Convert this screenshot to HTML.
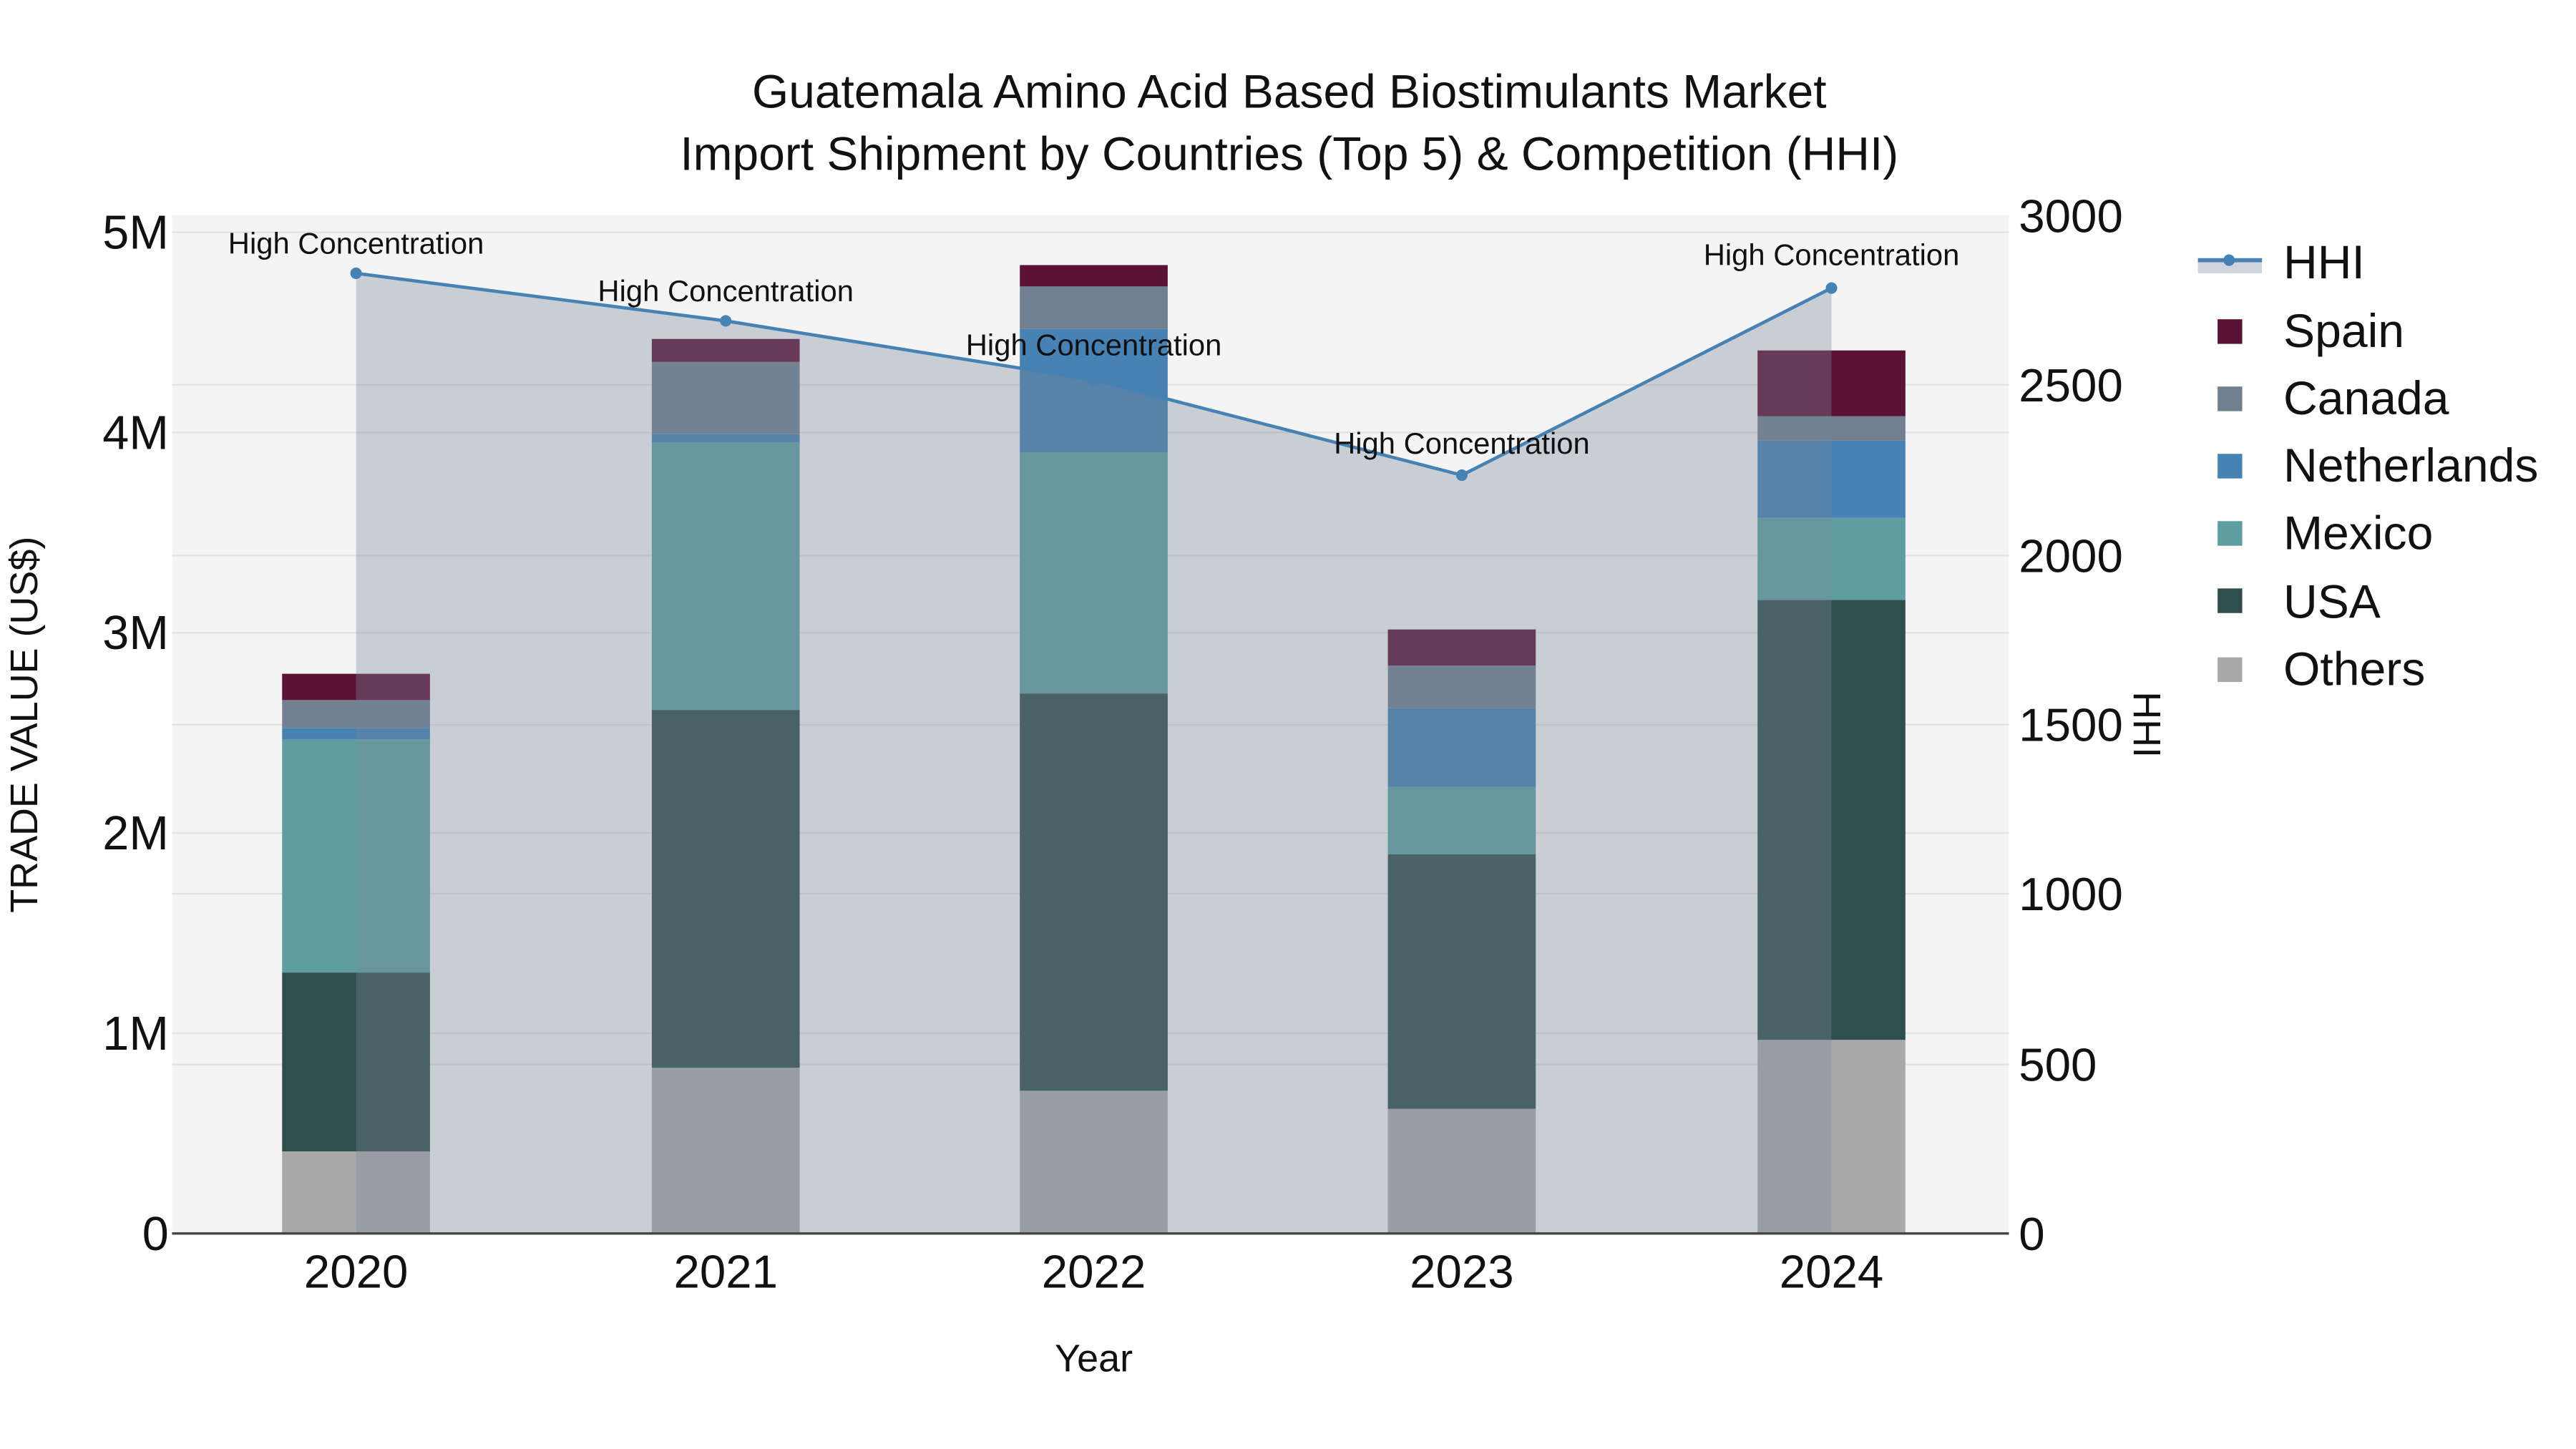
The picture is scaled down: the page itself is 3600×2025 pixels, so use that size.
<!DOCTYPE html>
<html><head><meta charset="utf-8"><style>
html,body{margin:0;padding:0;background:#fff}
svg{display:block}
text{font-family:"Liberation Sans",Arial,sans-serif;fill:#111}
</style></head><body>
<svg width="3600" height="2025" viewBox="0 0 1560 877.5" xmlns="http://www.w3.org/2000/svg">
<rect x="0" y="0" width="1560" height="877.5" fill="#fff"/>
<g transform="matrix(0.995 0 0 0.994 0.7 0.5)">
<rect x="104" y="130.5" width="1118" height="620.5" fill="#f4f4f4"/>
<g stroke="#e2e2e2" stroke-width="1">
<line x1="104" x2="1222" y1="629" y2="629"/><line x1="104" x2="1222" y1="507" y2="507"/>
<line x1="104" x2="1222" y1="385" y2="385"/><line x1="104" x2="1222" y1="263" y2="263"/>
<line x1="104" x2="1222" y1="141" y2="141"/>
<line x1="104" x2="1222" y1="648" y2="648"/><line x1="104" x2="1222" y1="544" y2="544"/>
<line x1="104" x2="1222" y1="441" y2="441"/><line x1="104" x2="1222" y1="338" y2="338"/>
<line x1="104" x2="1222" y1="234" y2="234"/>
</g>
<g>
<rect x="171" width="90" y="701" height="50" fill="#a9a9a9"/>
<rect x="171" width="90" y="592" height="109" fill="#2f4f4f"/>
<rect x="171" width="90" y="450" height="142" fill="#5f9ea0"/>
<rect x="171" width="90" y="443" height="7" fill="#4682b4"/>
<rect x="171" width="90" y="426" height="17" fill="#708090"/>
<rect x="171" width="90" y="410" height="16" fill="#5c1236"/>
<rect x="396" width="90" y="650" height="101" fill="#a9a9a9"/>
<rect x="396" width="90" y="432" height="218" fill="#2f4f4f"/>
<rect x="396" width="90" y="269" height="163" fill="#5f9ea0"/>
<rect x="396" width="90" y="264" height="5" fill="#4682b4"/>
<rect x="396" width="90" y="220" height="44" fill="#708090"/>
<rect x="396" width="90" y="206" height="14" fill="#5c1236"/>
<rect x="620" width="90" y="664" height="87" fill="#a9a9a9"/>
<rect x="620" width="90" y="422" height="242" fill="#2f4f4f"/>
<rect x="620" width="90" y="275" height="147" fill="#5f9ea0"/>
<rect x="620" width="90" y="200" height="75" fill="#4682b4"/>
<rect x="620" width="90" y="174" height="26" fill="#708090"/>
<rect x="620" width="90" y="161" height="13" fill="#5c1236"/>
<rect x="844" width="90" y="675" height="76" fill="#a9a9a9"/>
<rect x="844" width="90" y="520" height="155" fill="#2f4f4f"/>
<rect x="844" width="90" y="479" height="41" fill="#5f9ea0"/>
<rect x="844" width="90" y="431" height="48" fill="#4682b4"/>
<rect x="844" width="90" y="405" height="26" fill="#708090"/>
<rect x="844" width="90" y="383" height="22" fill="#5c1236"/>
<rect x="1069" width="90" y="633" height="118" fill="#a9a9a9"/>
<rect x="1069" width="90" y="365" height="268" fill="#2f4f4f"/>
<rect x="1069" width="90" y="315" height="50" fill="#5f9ea0"/>
<rect x="1069" width="90" y="268" height="47" fill="#4682b4"/>
<rect x="1069" width="90" y="253" height="15" fill="#708090"/>
<rect x="1069" width="90" y="213" height="40" fill="#5c1236"/>
</g>
<polygon points="216,166 441,195 665,231 889,289 1114,175 1114,751 216,751" fill="rgba(119,136,153,0.35)"/>
<polyline points="216,166 441,195 665,231 889,289 1114,175" fill="none" stroke="#4682b4" stroke-width="2"/>
<g fill="#4682b4">
<circle cx="216" cy="166" r="3.5"/><circle cx="441" cy="195" r="3.5"/><circle cx="665" cy="231" r="3.5"/>
<circle cx="889" cy="289" r="3.5"/><circle cx="1114" cy="175" r="3.5"/>
</g>
<line x1="104" x2="1222" y1="751" y2="751" stroke="#444" stroke-width="1.5"/>
<g font-size="18.2" text-anchor="middle">
<text x="216" y="154">High Concentration</text>
<text x="441" y="183">High Concentration</text>
<text x="665" y="216">High Concentration</text>
<text x="889" y="276">High Concentration</text>
<text x="1114" y="161">High Concentration</text>
</g>
<g font-size="28.7" text-anchor="middle">
<text x="784" y="65">Guatemala Amino Acid Based Biostimulants Market</text>
<text x="784" y="103">Import Shipment by Countries (Top 5) &amp; Competition (HHI)</text>
</g>
<g font-size="29" text-anchor="end">
<text x="102" y="761">0</text><text x="102" y="639">1M</text><text x="102" y="517">2M</text>
<text x="102" y="395">3M</text><text x="102" y="273">4M</text><text x="102" y="151">5M</text>
</g>
<g font-size="28.5" text-anchor="start">
<text x="1228" y="761">0</text><text x="1228" y="658">500</text><text x="1228" y="554">1000</text>
<text x="1228" y="451">1500</text><text x="1228" y="348">2000</text><text x="1228" y="244">2500</text>
<text x="1228" y="141">3000</text>
</g>
<g font-size="28.5" text-anchor="middle">
<text x="216" y="784">2020</text><text x="441" y="784">2021</text><text x="665" y="784">2022</text>
<text x="889" y="784">2023</text><text x="1114" y="784">2024</text>
</g>
<text x="665" y="835" font-size="23.5" text-anchor="middle">Year</text>
<text transform="translate(22,441) rotate(-90)" font-size="23.5" text-anchor="middle">TRADE VALUE (US$)</text>
<text transform="translate(1298,441) rotate(90)" font-size="23.5" text-anchor="middle">HHI</text>
<rect x="1337" y="158" width="39" height="8" fill="#d0d5db"/>
<line x1="1337" x2="1376" y1="158" y2="158" stroke="#4682b4" stroke-width="2.5"/>
<circle cx="1356" cy="158" r="3.5" fill="#4682b4"/>
<g font-size="28.8">
<text x="1389" y="169">HHI</text>
<text x="1389" y="211">Spain</text>
<text x="1389" y="252">Canada</text>
<text x="1389" y="293">Netherlands</text>
<text x="1389" y="334">Mexico</text>
<text x="1389" y="376">USA</text>
<text x="1389" y="417">Others</text>
</g>
<rect x="1349" y="194" width="15" height="15" fill="#5c1236"/>
<rect x="1349" y="235" width="15" height="15" fill="#708090"/>
<rect x="1349" y="276" width="15" height="15" fill="#4682b4"/>
<rect x="1349" y="317" width="15" height="15" fill="#5f9ea0"/>
<rect x="1349" y="358" width="15" height="15" fill="#2f4f4f"/>
<rect x="1349" y="400" width="15" height="15" fill="#a9a9a9"/>
</g>
</svg>
</body></html>
